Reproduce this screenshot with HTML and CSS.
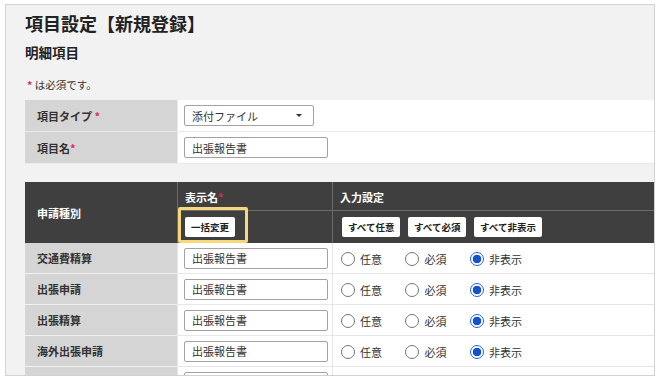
FILE: index.html
```
<!DOCTYPE html>
<html lang="ja">

<head>
  <title>項目設定</title>
  <meta charset="UTF-8" />
  <meta name="viewport" content="width=device-width,initial-scale=1" />
  <link rel="stylesheet" href="styles.css">
</head>

<body>
  <div class="frame">
    <h1 class="page-title">項目設定【新規登録】</h1>
    <h2 class="section-title">明細項目</h2>
    <p class="note"><span class="req">*</span> は必須です。</p>

    <table class="form-table">
      <colgroup>
        <col class="c-label" />
        <col class="c-rest" />
      </colgroup>
      <tr>
        <th>項目タイプ <span class="req">*</span></th>
        <td>
          <span class="select-wrap">
            <select class="select">
              <option>添付ファイル</option>
            </select>
          </span>
        </td>
      </tr>
      <tr>
        <th>項目名<span class="req">*</span></th>
        <td><input class="text-input" type="text" value="出張報告書" /></td>
      </tr>
    </table>

    <table class="detail-table">
      <colgroup>
        <col class="c-label" />
        <col class="c-name" />
        <col class="c-rest" />
      </colgroup>
      <tr class="head-1">
        <th class="kind" rowspan="2">申請種別</th>
        <th>表示名<span class="req">*</span></th>
        <th>入力設定</th>
      </tr>
      <tr class="head-2">
        <th><button class="small-btn">一括変更</button></th>
        <th class="btn-row">
          <button class="small-btn">すべて任意</button>
          <button class="small-btn">すべて必須</button>
          <button class="small-btn">すべて非表示</button>
        </th>
      </tr>
      <tr>
        <th>交通費精算</th>
        <td><input class="text-input" type="text" value="出張報告書" /></td>
        <td>
          <label class="radio"><input type="radio" name="r1" />任意</label>
          <label class="radio"><input type="radio" name="r1" />必須</label>
          <label class="radio"><input type="radio" name="r1" checked />非表示</label>
        </td>
      </tr>
      <tr>
        <th>出張申請</th>
        <td><input class="text-input" type="text" value="出張報告書" /></td>
        <td>
          <label class="radio"><input type="radio" name="r2" />任意</label>
          <label class="radio"><input type="radio" name="r2" />必須</label>
          <label class="radio"><input type="radio" name="r2" checked />非表示</label>
        </td>
      </tr>
      <tr>
        <th>出張精算</th>
        <td><input class="text-input" type="text" value="出張報告書" /></td>
        <td>
          <label class="radio"><input type="radio" name="r3" />任意</label>
          <label class="radio"><input type="radio" name="r3" />必須</label>
          <label class="radio"><input type="radio" name="r3" checked />非表示</label>
        </td>
      </tr>
      <tr>
        <th>海外出張申請</th>
        <td><input class="text-input" type="text" value="出張報告書" /></td>
        <td>
          <label class="radio"><input type="radio" name="r4" />任意</label>
          <label class="radio"><input type="radio" name="r4" />必須</label>
          <label class="radio"><input type="radio" name="r4" checked />非表示</label>
        </td>
      </tr>
      <!-- next row, only its top edge is in view -->
      <tr class="cut-row">
        <th></th>
        <td><input class="text-input" type="text" /></td>
        <td></td>
      </tr>
    </table>

    <!-- highlight around the bulk change button -->
    <div class="highlight"></div>
  </div>
</body>

</html>
```

FILE: styles.css
```
body,
html {
  margin: 0;
  padding: 0;
  border: 0;
  background: #fff;
}

body {
  font-family: "Noto Sans CJK JP", "Noto Sans", sans-serif;
  color: #333;
}

.frame {
  position: relative;
  box-sizing: border-box;
  width: 650px;
  height: 372px;
  margin: 4px 0 0 5px;
  padding-left: 19px;
  border: 1px solid #d2d2d2;
  background: #f2f2f2;
  overflow: hidden;
}

.page-title {
  margin: 6px 0 0;
  font-size: 18px;
  line-height: 24px;
  font-weight: bold;
  color: #222;
}

.section-title {
  margin: 8px 0 0;
  font-size: 13.5px;
  line-height: 18px;
  font-weight: bold;
  color: #222;
}

.note {
  margin: 16px 0 0;
  font-size: 10.5px;
  line-height: 16px;
  padding-left: 2px;
}

.req {
  color: #e3285c;
  font-weight: bold;
}

table {
  table-layout: fixed;
  border-collapse: separate;
  border-spacing: 0;
  width: 720px;
}

.c-label {
  width: 153px;
}

.c-name {
  width: 155px;
}

th,
td {
  box-sizing: border-box;
  padding: 0 0 0 6px;
  text-align: left;
  vertical-align: middle;
  font-size: 11px;
  white-space: nowrap;
}

th {
  background: #d5d5d5;
  padding-left: 12px;
  font-weight: bold;
  color: #333;
}

/* form table */
.form-table {
  margin-top: 7px;
}

.form-table th,
.form-table td {
  height: 32px;
  border-bottom: 1px solid #e9e9e9;
  border-right: 1px solid #e9e9e9;
}

.form-table td {
  background: #fff;
}

.select-wrap {
  position: relative;
  display: inline-block;
}

.select-wrap::after {
  content: "";
  position: absolute;
  right: 12px;
  top: 9px;
  border-left: 3px solid transparent;
  border-right: 3px solid transparent;
  border-top: 3px solid #333;
  pointer-events: none;
}

.select {
  appearance: none;
  -webkit-appearance: none;
  box-sizing: border-box;
  width: 130px;
  height: 21px;
  padding: 0 0 0 7px;
  border: 1px solid #a2a2a2;
  border-radius: 2px;
  background: #fff;
  font-family: inherit;
  font-size: 11px;
  color: #333;
}

.text-input {
  box-sizing: border-box;
  width: 144px;
  height: 21px;
  padding: 0 0 0 7px;
  border: 1px solid #a2a2a2;
  border-radius: 2px;
  background: #fff;
  font-family: inherit;
  font-size: 11px;
  color: #333;
  outline: none;
}

/* detail table */
.detail-table {
  margin-top: 18px;
}

.detail-table th,
.detail-table td {
  height: 31px;
  border-bottom: 1px solid #e6e6e6;
  border-right: 1px solid #e6e6e6;
}

.detail-table th {
  border-bottom-color: #f0f0f0;
}

.detail-table td {
  background: #fff;
}

.detail-table .head-1 th,
.detail-table .head-2 th {
  background: #3f3f3f;
  color: #fff;
  border-right-color: #6a6a6a;
  border-bottom-color: #6a6a6a;
}

.detail-table .head-1 th {
  height: 29px;
  padding-top: 1px;
}

.detail-table .head-2 th {
  height: 32px;
  border-bottom: 0;
  padding-left: 7px;
}

.detail-table .head-1 th:not(.kind) {
  padding-left: 7px;
}

.detail-table .head-1 th.kind {
  padding-left: 12px;
  border-bottom: 0;
}

.detail-table .head-2 th.btn-row {
  padding-left: 9px;
}

.detail-table .cut-row td {
  vertical-align: top;
  padding-top: 5px;
}

.small-btn {
  height: 20px;
  margin: 0 5px 0 0;
  padding: 0 6px;
  border: 0;
  border-radius: 2px;
  background: #fff;
  color: #222;
  font-family: inherit;
  font-size: 9.5px;
  font-weight: bold;
}

.detail-table td:last-child {
  padding-left: 8px;
}

.radio {
  display: inline-flex;
  align-items: center;
  gap: 5px;
  margin-right: 21px;
  font-size: 11px;
  color: #333;
  vertical-align: middle;
}

.radio input {
  appearance: none;
  -webkit-appearance: none;
  box-sizing: border-box;
  width: 14px;
  height: 14px;
  margin: 0;
  border: 1px solid #767676;
  border-radius: 50%;
  background: #fff;
}

.radio input:checked {
  border: 1.5px solid #2a62d4;
  background: radial-gradient(circle, #1454c8 0 4px, #fff 4.6px);
}

.highlight {
  position: absolute;
  left: 172px;
  top: 202px;
  box-sizing: border-box;
  width: 70px;
  height: 36px;
  border: 3px solid #f6d77c;
  border-radius: 2px;
}
```
